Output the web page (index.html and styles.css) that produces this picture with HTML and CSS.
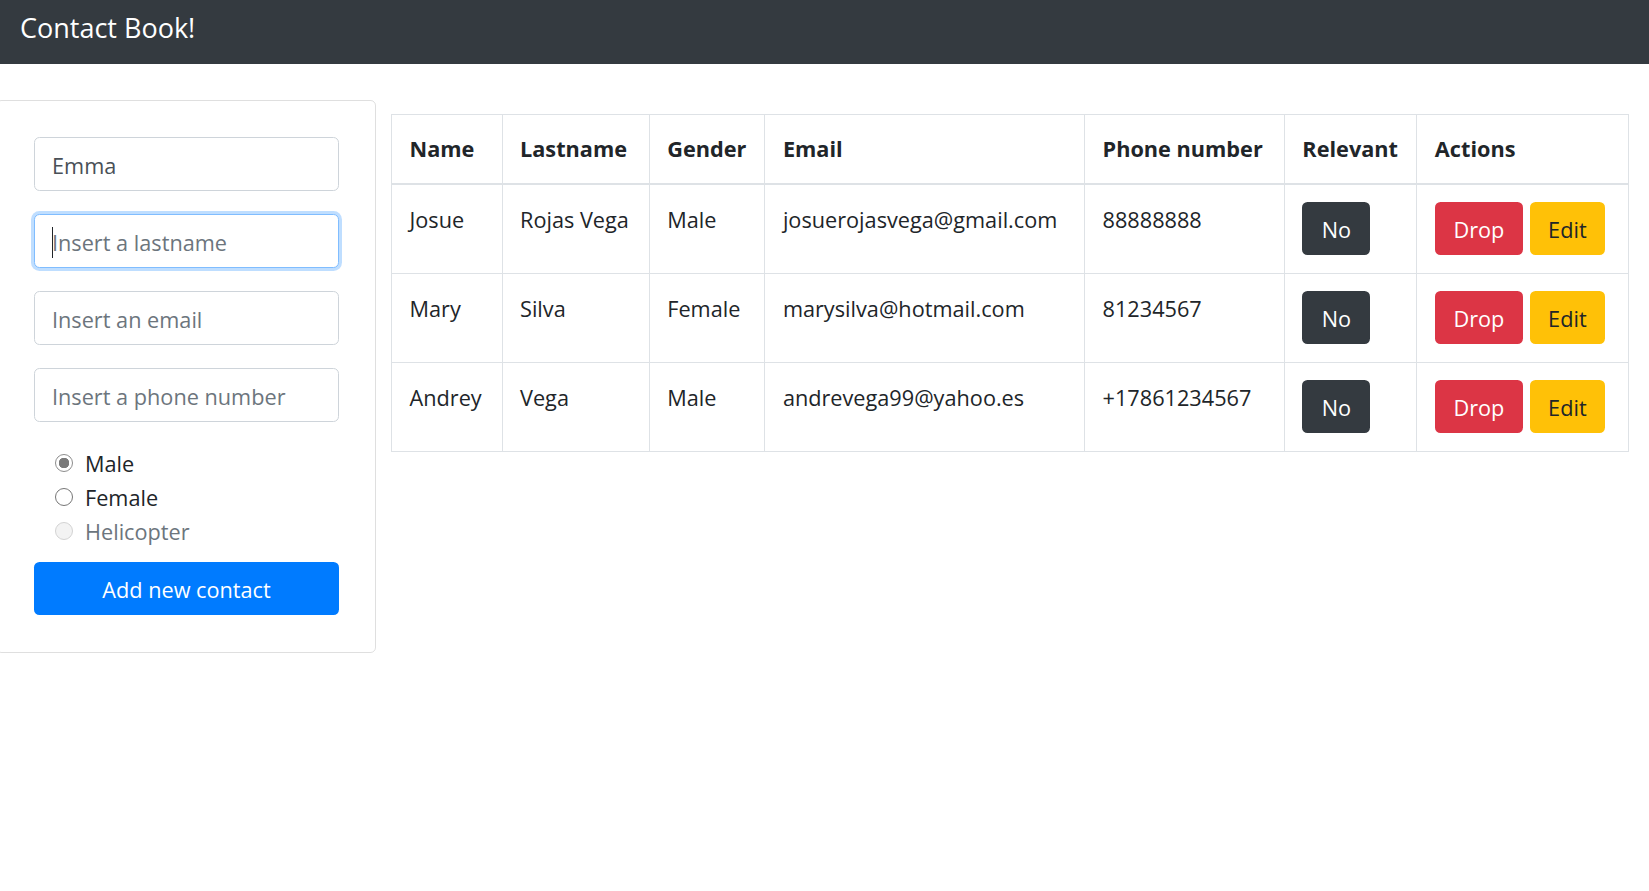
FILE: index.html
```html
<!DOCTYPE html>
<html lang="en">
<head>
<meta charset="utf-8">
<title>Contact Book!</title>
<link rel="stylesheet" href="styles.css">
</head>
<body>
<header class="navbar">
  <span class="brand">Contact Book!</span>
</header>
<main class="layout">
  <aside class="card">
    <form class="contact-form">
      <input class="field" type="text" value="Emma">
      <div class="focus-wrap">
        <input class="field field-focus" type="text" placeholder="Insert a lastname">
        <span class="caret"></span>
      </div>
      <input class="field" type="text" placeholder="Insert an email">
      <input class="field field-last" type="text" placeholder="Insert a phone number">
      <div class="radios">
        <label class="radio"><span class="dot dot-checked"></span><span class="radio-label">Male</span></label>
        <label class="radio"><span class="dot"></span><span class="radio-label">Female</span></label>
        <label class="radio radio-disabled"><span class="dot dot-disabled"></span><span class="radio-label">Helicopter</span></label>
      </div>
      <button class="btn-primary" type="button">Add new contact</button>
    </form>
  </aside>
  <section class="table-wrap">
    <table class="contacts">
      <colgroup>
        <col class="c-name">
        <col class="c-last">
        <col class="c-gender">
        <col class="c-email">
        <col class="c-phone">
        <col class="c-rel">
        <col class="c-actions">
      </colgroup>
      <thead>
        <tr>
          <th>Name</th>
          <th>Lastname</th>
          <th>Gender</th>
          <th>Email</th>
          <th>Phone number</th>
          <th>Relevant</th>
          <th>Actions</th>
        </tr>
      </thead>
      <tbody>
        <tr>
          <td>Josue</td>
          <td>Rojas Vega</td>
          <td>Male</td>
          <td>josuerojasvega@gmail.com</td>
          <td>88888888</td>
          <td class="btn-cell"><button class="btn btn-dark" type="button">No</button></td>
          <td class="btn-cell"><div class="actions"><button class="btn btn-danger" type="button">Drop</button><button class="btn btn-warning" type="button">Edit</button></div></td>
        </tr>
        <tr>
          <td>Mary</td>
          <td>Silva</td>
          <td>Female</td>
          <td>marysilva@hotmail.com</td>
          <td>81234567</td>
          <td class="btn-cell"><button class="btn btn-dark" type="button">No</button></td>
          <td class="btn-cell"><div class="actions"><button class="btn btn-danger" type="button">Drop</button><button class="btn btn-warning" type="button">Edit</button></div></td>
        </tr>
        <tr>
          <td>Andrey</td>
          <td>Vega</td>
          <td>Male</td>
          <td>andrevega99@yahoo.es</td>
          <td>+17861234567</td>
          <td class="btn-cell"><button class="btn btn-dark" type="button">No</button></td>
          <td class="btn-cell"><div class="actions"><button class="btn btn-danger" type="button">Drop</button><button class="btn btn-warning" type="button">Edit</button></div></td>
        </tr>
      </tbody>
    </table>
  </section>
</main>
</body>
</html>
```
FILE: styles.css
```css
* {
  box-sizing: border-box;
}

html, body {
  margin: 0;
  padding: 0;
  background: #fff;
}

body {
  font-family: "Open Sans", "Noto Sans", sans-serif;
  font-size: 21.7px;
  line-height: 33px;
  color: #212529;
  overflow: hidden;
}

.navbar {
  height: 64px;
  background: #343a40;
  padding: 8px 20px 0;
}

.brand {
  display: inline-block;
  color: #fff;
  font-size: 27px;
  line-height: 40px;
}

.layout {
  display: flex;
  align-items: flex-start;
  gap: 15px;
  padding-top: 36px;
}

.card {
  flex: 0 0 380px;
  width: 380px;
  margin-left: -4px;
  border: 1px solid rgba(0, 0, 0, 0.125);
  border-radius: 5.5px;
  padding: 36px 36px 36.5px 37px;
}

.contact-form {
  display: flex;
  flex-direction: column;
}

.field {
  display: block;
  width: 100%;
  height: 53.5px;
  margin: 0 0 23.5px;
  padding: 3px 17px 0;
  border: 1px solid #ced4da;
  border-radius: 5.5px;
  font-family: inherit;
  font-size: 21.7px;
  color: #495057;
  background: #fff;
  outline: none;
}

.field::placeholder {
  color: #6c757d;
  opacity: 1;
}

.field-last {
  margin-bottom: 25px;
}

.focus-wrap {
  position: relative;
}

.field-focus {
  border-color: #80bdff;
  box-shadow: 0 0 0 3px rgba(0, 123, 255, 0.25);
}

.caret {
  position: absolute;
  left: 18px;
  top: 13px;
  width: 1px;
  height: 31px;
  background: #212529;
}

.radios {
  display: flex;
  flex-direction: column;
}

.radio {
  display: flex;
  align-items: center;
  height: 34px;
  padding-left: 21px;
}

.dot {
  width: 18px;
  height: 18px;
  border-radius: 50%;
  border: 1px solid #767676;
  background: #fff;
  margin-right: 12px;
  flex: 0 0 18px;
  position: relative;
  top: -1px;
}

.dot-checked {
  border-color: #8d8d8d;
  background: radial-gradient(circle, #7a7a7a 0 5px, #fff 5.5px);
}

.dot-disabled {
  border-color: #d3d3d3;
  background: #f3f3f3;
}

.radio-disabled .radio-label {
  color: #6c757d;
}

.btn-primary {
  display: block;
  width: 100%;
  height: 53.5px;
  margin-top: 13px;
  border: 0;
  border-radius: 5.5px;
  background: #007bff;
  color: #fff;
  font-family: inherit;
  font-size: 21.7px;
  line-height: 33px;
  padding: 2px 0 0;
}

.table-wrap {
  flex: 0 0 1237px;
  margin-top: 13.6px;
}

.contacts {
  width: 1237px;
  border-collapse: collapse;
  table-layout: fixed;
}

.c-name { width: 110.5px; }
.c-last { width: 147.2px; }
.c-gender { width: 115.7px; }
.c-email { width: 319.7px; }
.c-phone { width: 199.8px; }
.c-rel { width: 132.5px; }
.c-actions { width: 211.4px; }

.contacts th,
.contacts td {
  border: 1px solid #dee2e6;
  padding: 17.5px;
  text-align: left;
  vertical-align: top;
  white-space: nowrap;
}

.contacts td {
  padding-top: 18.25px;
  padding-bottom: 16.25px;
}

.contacts td.btn-cell {
  padding-top: 17.25px;
  padding-bottom: 17.25px;
}

.contacts thead th {
  border-bottom: 2px solid #dee2e6;
  font-weight: 700;
}

.actions {
  display: flex;
  gap: 7px;
}

.btn {
  display: inline-flex;
  justify-content: center;
  height: 53.5px;
  padding: 10px 0 8px;
  border: 1px solid transparent;
  border-radius: 5.5px;
  font-family: inherit;
  font-size: 21.7px;
  line-height: 33px;
}

.btn-dark {
  width: 68px;
  background: #343a40;
  color: #fff;
}

.btn-danger {
  width: 88px;
  background: #dc3545;
  color: #fff;
}

.btn-warning {
  width: 75px;
  background: #ffc107;
  color: #212529;
}
```
